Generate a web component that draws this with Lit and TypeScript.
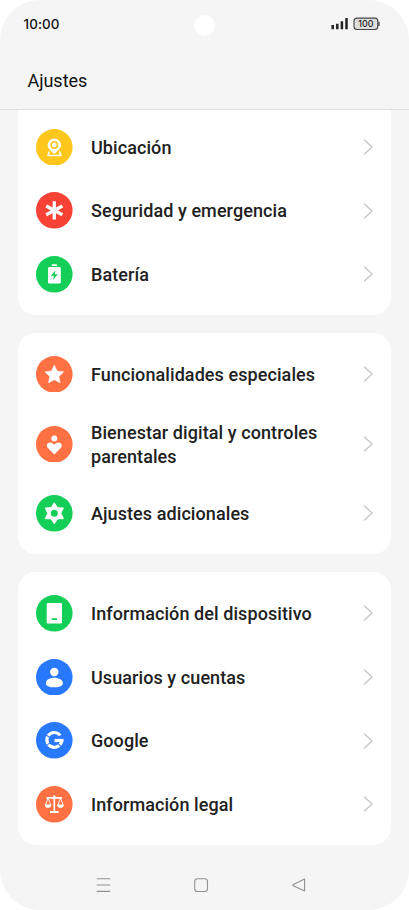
import { LitElement, html, svg, css, type TemplateResult } from "lit";
import { customElement, property } from "lit/decorators.js";

const glyphs: Record<string, TemplateResult> = {
  location: svg`
    <path d="M13.4 22.4 L11.9 26.4 H25 L23.3 22.4" fill="none" stroke="#fff" stroke-width="1.5" stroke-linejoin="round"/>
    <path d="M18.3 9.5 a6.7 6.7 0 0 1 6.7 6.7 c0 3.3-3.8 5.8-6.7 8.9 c-2.9-3.1-6.7-5.6-6.7-8.9 a6.7 6.7 0 0 1 6.7-6.7z" fill="#fff"/>
    <circle cx="18.3" cy="16" r="3.2" fill="none" stroke="#ffc61b" stroke-width="1.5"/>`,
  emergency: svg`
    <path d="M18.3 9.2V27.4 M10.2 14L26.4 22.7 M26.4 14L10.2 22.7" stroke="#fff" stroke-width="3.3" fill="none"/>`,
  battery: svg`
    <rect x="15.7" y="8.3" width="5.2" height="1.7" rx=".4" fill="#fff"/>
    <rect x="12" y="11" width="12.8" height="16.6" rx="1.4" fill="#fff"/>
    <path d="M19.6 14.3 L14.9 19.7 H18 L17 23.7 L21.9 18.2 H18.7z" fill="#13ce57"/>`,
  star: svg`
    <path d="M18.3 8.9 L21.2 14.9 L27.8 15.8 L23 20.4 L24.2 27 L18.3 23.8 L12.4 27 L13.6 20.4 L8.8 15.8 L15.4 14.9z" fill="#fff" stroke="#fff" stroke-width=".4" stroke-linejoin="round"/>`,
  wellbeing: svg`
    <circle cx="18.3" cy="12.5" r="3" fill="#fff"/>
    <path d="M18.3 28.4 L12.1 22.3 C9.5 19.5 11.3 16.6 14.2 16.6 C16.2 16.6 17.5 17.6 18.3 18.9 C19.1 17.6 20.4 16.6 22.4 16.6 C25.3 16.6 27.1 19.5 24.5 22.3z" fill="#fff"/>`,
  settings: svg`
    <path d="M18.3 7.8 L21.5 12.7 L27.4 13 L24.8 18.3 L27.4 23.6 L21.5 23.9 L18.3 28.8 L15.1 23.9 L9.2 23.6 L11.8 18.3 L9.2 13 L15.1 12.7z" fill="#fff" stroke="#fff" stroke-width="1" stroke-linejoin="round"/>
    <circle cx="18.3" cy="18.3" r="3.5" fill="#13ce57"/>`,
  device: svg`
    <rect x="10.7" y="8.1" width="15.3" height="20.3" rx="1.2" fill="#fff"/>
    <rect x="15.6" y="23.2" width="5.4" height="1.7" rx=".3" fill="#13ce57"/>`,
  user: svg`
    <circle cx="18.3" cy="13" r="4.2" fill="#fff"/>
    <path d="M9.8 24.4 C9.8 21 13.5 18.8 18.3 18.8 S26.9 21 26.9 24.4 C26.9 26.8 23.2 28.3 18.3 28.3 S9.8 26.8 9.8 24.4z" fill="#fff"/>`,
  google: svg`
    <path d="M24.2 13.4 A7.4 7.4 0 1 0 25.7 18.6" fill="none" stroke="#fff" stroke-width="3.2"/>
    <rect x="18.6" y="16.9" width="8.9" height="3.2" fill="#fff"/>
    <path d="M9 12.2 L14.8 16.2 M9 24.4 L14.8 20.4 M21.8 21.2 L26 25.8" stroke="#2979ff" stroke-width="1.1"/>`,
  legal: svg`
    <path d="M18.3 9.4V26 M10.5 11.9H26.1" stroke="#fff" stroke-width="1.7" fill="none"/>
    <circle cx="18.3" cy="11.3" r="1.6" fill="#fff"/>
    <path d="M14 26H22.6" stroke="#fff" stroke-width="2"/>
    <path d="M12.1 12 L9.5 19 M12.1 12 L14.7 19 M24.5 12 L21.9 19 M24.5 12 L27.1 19" stroke="#fff" stroke-width=".9" fill="none"/>
    <path d="M8.8 18.4H15.4 A3.3 3.4 0 0 1 8.8 18.4z M21.2 18.4H27.8 A3.3 3.4 0 0 1 21.2 18.4z" fill="#fff"/>`,
};

interface Entry {
  icon: string;
  color: string;
  label: string;
}

const amber = "#ffc61b";
const red = "#f94236";
const green = "#13ce57";
const orange = "#ff7043";
const blue = "#2979ff";

const groups: Entry[][] = [
  [
    { icon: "location", color: amber, label: "Ubicación" },
    { icon: "emergency", color: red, label: "Seguridad y emergencia" },
    { icon: "battery", color: green, label: "Batería" },
  ],
  [
    { icon: "star", color: orange, label: "Funcionalidades especiales" },
    { icon: "wellbeing", color: orange, label: "Bienestar digital y controles parentales" },
    { icon: "settings", color: green, label: "Ajustes adicionales" },
  ],
  [
    { icon: "device", color: green, label: "Información del dispositivo" },
    { icon: "user", color: blue, label: "Usuarios y cuentas" },
    { icon: "google", color: blue, label: "Google" },
    { icon: "legal", color: orange, label: "Información legal" },
  ],
];

@customElement("settings-row")
class SettingsRow extends LitElement {
  @property({ attribute: false }) entry!: Entry;

  static styles = css`
    :host {
      display: flex;
      align-items: center;
      box-sizing: border-box;
      min-height: 63.7px;
      padding: 13.5px 17px 13.5px 18px;
    }
    .icon {
      width: 36.6px;
      height: 36.6px;
      flex: none;
    }
    .label {
      flex: 1;
      margin: 1px 30px -0.4px 18.4px;
      font-size: 18px;
      letter-spacing: 0.08px;
      line-height: 24px;
      font-weight: 500;
      color: #212121;
    }
    .chevron {
      width: 11px;
      height: 18px;
      flex: none;
    }
  `;

  render() {
    return html`
      <svg class="icon" viewBox="0 0 36.6 36.6">
        <circle cx="18.3" cy="18.3" r="18.3" fill=${this.entry.color}></circle>
        ${glyphs[this.entry.icon]}
      </svg>
      <span class="label">${this.entry.label}</span>
      <svg class="chevron" viewBox="0 0 11 18">
        <path d="M1.5 2 L9.1 9 L1.5 16" fill="none" stroke="#c8c8c8" stroke-width="1.4" stroke-linecap="round" stroke-linejoin="round"></path>
      </svg>
    `;
  }
}

@customElement("app-root")
class AppRoot extends LitElement {
  static styles = css`
    :host {
      display: block;
      background: #fff;
      font-family: Roboto, "Liberation Sans", sans-serif;
    }
    .screen {
      display: flex;
      flex-direction: column;
      width: 409px;
      height: 910px;
      overflow: hidden;
      border-radius: 40px;
      background: #f5f5f5;
    }
    .header {
      flex: none;
      box-sizing: border-box;
      height: 110px;
      border-bottom: 1px solid #dfdfdf;
    }
    .status {
      display: grid;
      grid-template-columns: 1fr 21px 1fr;
      align-items: center;
      height: 49px;
      padding: 0 29px 0 23.5px;
    }
    .clock {
      font-family: Inter, "Noto Sans", sans-serif;
      font-size: 13.4px;
      letter-spacing: 0.1px;
      font-weight: 500;
      line-height: 20px;
      color: #111;
      margin-top: -2px;
    }
    .camera {
      width: 21px;
      height: 21px;
      border-radius: 50%;
      background: #fff;
      margin-left: 3px;
      margin-top: 1px;
    }
    .indicators {
      justify-self: end;
      width: 50px;
      height: 14px;
      margin-top: -2px;
    }
    .title {
      margin: 0;
      padding: 20px 27.4px 0;
      font-size: 18px;
      line-height: 24px;
      font-weight: 400;
      color: #111;
    }
    .content {
      flex: none;
      display: flex;
      flex-direction: column;
      gap: 18px;
      padding: 0 18px;
    }
    .card {
      display: flex;
      flex-direction: column;
      padding: 9.3px 0 8.8px;
      border-radius: 18px;
      background: #fff;
    }
    .card.clipped {
      padding-top: 5.2px;
      border-radius: 0 0 18px 18px;
    }
    .nav {
      flex: 1;
      display: flex;
      align-items: center;
      justify-content: space-between;
      padding: 15.6px 102px 0 95px;
    }
    .nav svg {
      width: 16px;
      height: 16px;
      fill: none;
      stroke: #929292;
      stroke-width: 1.1;
      stroke-linejoin: round;
    }
  `;

  render() {
    return html`
      <div class="screen">
        <div class="header">
          <div class="status">
            <span class="clock">10:00</span>
            <span class="camera"></span>
            <svg class="indicators" viewBox="0 0 50 14">
              <path d="M2.7 8V12.2 M7.3 6.7V12.2 M11.9 4.3V12.2 M16.5 1.1V12.2" stroke="#222" stroke-width="2.5" stroke-linecap="butt"></path>
              <rect x="24" y="1.1" width="23.8" height="11.4" rx="3" fill="#dedede" stroke="#444" stroke-width="1.1"></rect>
              <path d="M48.9 4.7V9" stroke="#444" stroke-width="1.4"></path>
              <text x="35.8" y="10.1" text-anchor="middle" font-family="Inter, Noto Sans, sans-serif" font-size="8.9" font-weight="500" fill="#222">100</text>
            </svg>
          </div>
          <h1 class="title">Ajustes</h1>
        </div>
        <div class="content">
          ${groups.map(
            (group, i) => html`
              <div class=${i === 0 ? "card clipped" : "card"}>
                ${group.map((entry) => html`<settings-row .entry=${entry}></settings-row>`)}
              </div>
            `,
          )}
        </div>
        <div class="nav">
          <svg viewBox="0 0 16 16"><path d="M1.7 1.8H15.3 M1.7 8H15.3 M1.7 14.4H15.3"></path></svg>
          <svg viewBox="0 0 16 16"><rect x="1.7" y="1.7" width="12.8" height="12.8" rx="2.8"></rect></svg>
          <svg viewBox="0 0 16 16"><path d="M13.6 2 V14 L1.8 8.4 V7.8z"></path></svg>
        </div>
      </div>
    `;
  }
}
